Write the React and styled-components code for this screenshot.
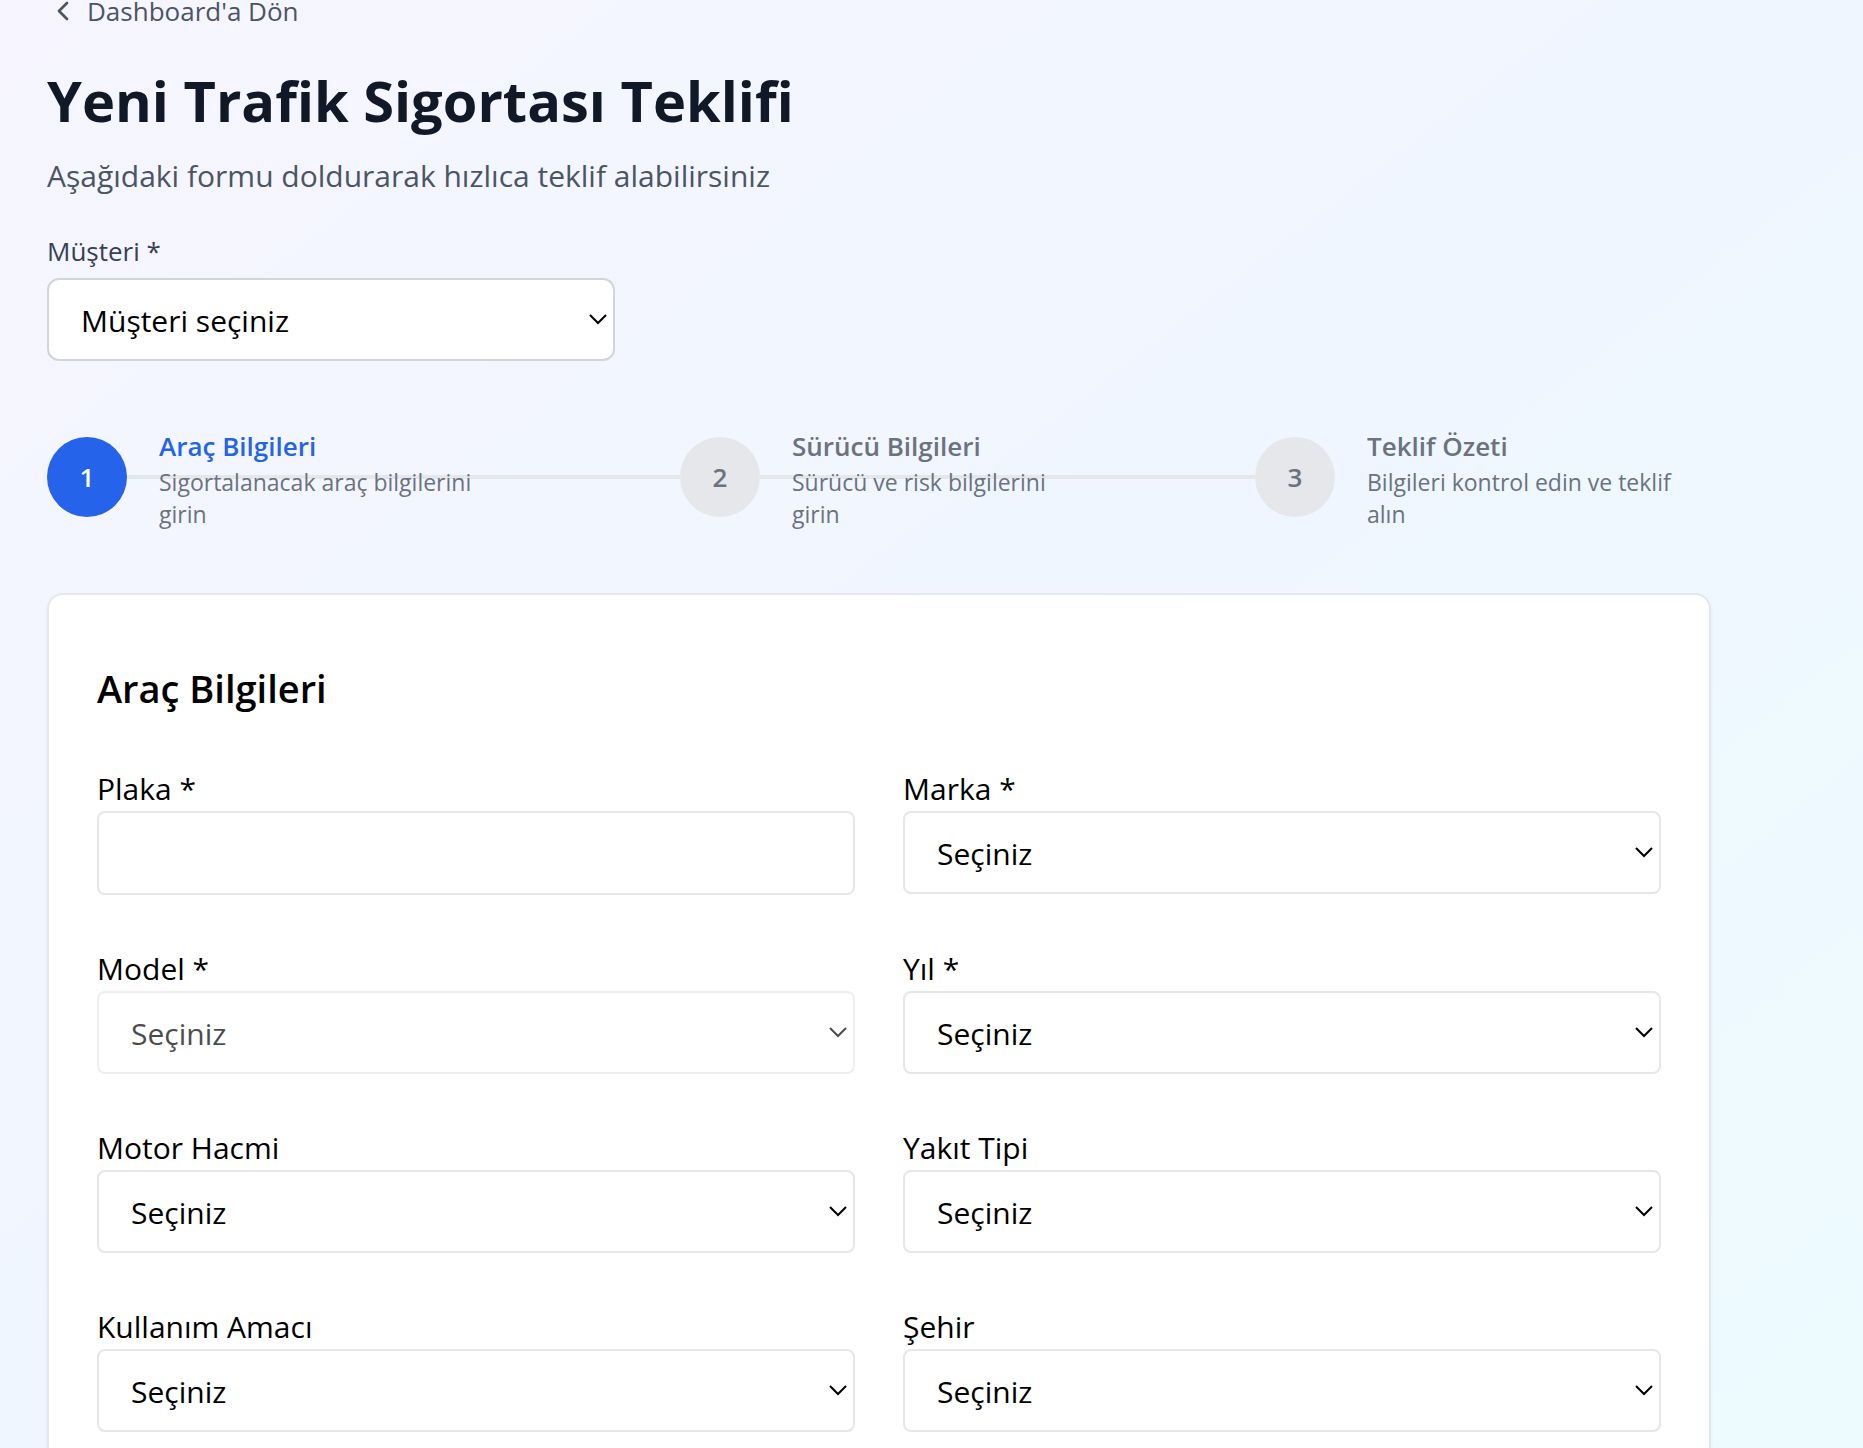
import React from "react";
import styled, { createGlobalStyle, css } from "styled-components";
import { ChevronLeft } from "lucide-react";

const GlobalStyle = createGlobalStyle`
  *, *::before, *::after { box-sizing: border-box; }
  body {
    margin: 0;
    overflow-x: hidden;
    font-family: "Segoe UI", "Open Sans", "Noto Sans", sans-serif;
    font-size: 30px;
    line-height: 48px;
    color: #000;
  }
  h1, h2, p { margin: 0; }
`;

const Page = styled.div`
  height: 100vh;
  overflow: hidden;
  background: linear-gradient(to bottom right, #faf5ff -25%, #eff6ff 52%, #ecfeff 130%);
`;

const Container = styled.main`
  max-width: 1711px;
  padding-left: 47px;
`;

const BackButton = styled.button`
  display: flex;
  align-items: center;
  gap: 8px;
  height: 22px;
  margin: 0 0 42px;
  padding: 0;
  border: 0;
  background: none;
  color: #4b5563;
  font: inherit;
  font-size: 26px;
  line-height: 22px;
  cursor: pointer;
`;

const PageTitle = styled.h1`
  margin-bottom: 16px;
  font-size: 56px;
  line-height: 72px;
  font-weight: 700;
  color: #111827;
`;

const Subtitle = styled.p`
  color: #4b5563;
`;

const Customer = styled.div`
  display: flex;
  flex-direction: column;
  gap: 7px;
  max-width: 568px;
  margin: 31px 0 63px;
`;

const CustomerLabel = styled.label`
  font-size: 26px;
  line-height: 40px;
  color: #374151;
`;

const control = css`
  display: block;
  width: 100%;
  padding: 3px 32px 0;
  border: 2px solid ${(p) => (p.$strong ? "#d1d5db" : "#e5e7eb")};
  border-radius: ${(p) => (p.$strong ? 12 : 8)}px;
  background: #fff;
  color: #000;
  font: inherit;
  outline: none;
`;

const TextInput = styled.input`
  ${control}
  height: 84px;
`;

const SelectBox = styled.div`
  position: relative;
  opacity: ${(p) => (p.$disabled ? 0.7 : 1)};
`;

const NativeSelect = styled.select`
  ${control}
  height: 83px;
  appearance: none;
  &:disabled { color: #000; opacity: 1; }
`;

const Arrow = styled.svg`
  position: absolute;
  top: 35px;
  right: 8px;
  width: 18px;
  height: 12px;
  fill: none;
  stroke: #000;
  stroke-width: 2;
  pointer-events: none;
`;

const Steps = styled.ol`
  display: grid;
  grid-template-columns: 633fr 575fr 456fr;
  margin: 0 0 63px;
  padding: 0;
  list-style: none;
`;

const Step = styled.li`
  position: relative;
  display: flex;
  align-items: center;
  gap: 32px;
  &:not(:last-child)::before {
    content: "";
    position: absolute;
    top: 51px;
    left: 80px;
    right: 0;
    height: 4px;
    background: #e5e7eb;
  }
`;

const StepNumber = styled.span`
  flex: none;
  display: grid;
  place-items: center;
  width: 80px;
  height: 80px;
  border-radius: 50%;
  background: ${(p) => (p.$active ? "#2563eb" : "#e5e7eb")};
  color: ${(p) => (p.$active ? "#fff" : "#6b7280")};
  font-size: 26px;
  font-weight: 600;
`;

const StepText = styled.div`
  position: relative;
  max-width: ${(p) => p.$width}px;
  padding-top: 2px;
`;

const StepTitle = styled.p`
  font-size: 26px;
  line-height: 40px;
  font-weight: 600;
  color: ${(p) => (p.$active ? "#2563eb" : "#6b7280")};
`;

const StepHint = styled.p`
  font-size: 23px;
  line-height: 32px;
  color: #6b7280;
`;

const Card = styled.section`
  padding: 65px 48px 64px;
  border: 2px solid #e5e7eb;
  border-radius: 16px;
  background: #fff;
  box-shadow: 0 2px 4px rgba(0, 0, 0, 0.05);
`;

const CardTitle = styled.h2`
  margin-bottom: 47px;
  font-size: 38px;
  line-height: 56px;
  font-weight: 600;
`;

const Fields = styled.div`
  display: grid;
  grid-template-columns: 1fr 1fr;
  gap: 48px;
`;

const FieldLabel = styled.label`
  display: block;
  padding-top: 4px;
  line-height: 44px;
`;

function Select({ id, placeholder, disabled, strong }) {
  return (
    <SelectBox $disabled={disabled}>
      <NativeSelect id={id} disabled={disabled} $strong={strong}>
        <option>{placeholder}</option>
      </NativeSelect>
      <Arrow viewBox="0 0 18 12" aria-hidden="true">
        <path d="M1 2l8 8 8-8" />
      </Arrow>
    </SelectBox>
  );
}

const steps = [
  { title: "Araç Bilgileri", hint: "Sigortalanacak araç bilgilerini girin", width: 320 },
  { title: "Sürücü Bilgileri", hint: "Sürücü ve risk bilgilerini girin", width: 288 },
  { title: "Teklif Özeti", hint: "Bilgileri kontrol edin ve teklif alın", width: 320 },
];

const fields = [
  { id: "plaka", label: "Plaka *", text: true },
  { id: "marka", label: "Marka *" },
  { id: "model", label: "Model *", disabled: true },
  { id: "yil", label: "Yıl *" },
  { id: "motor", label: "Motor Hacmi" },
  { id: "yakit", label: "Yakıt Tipi" },
  { id: "kullanim", label: "Kullanım Amacı" },
  { id: "sehir", label: "Şehir" },
];

export default function App() {
  return (
    <Page>
      <GlobalStyle />
      <Container>
        <BackButton type="button">
          <ChevronLeft size={32} aria-hidden="true" />
          Dashboard'a Dön
        </BackButton>
        <PageTitle>Yeni Trafik Sigortası Teklifi</PageTitle>
        <Subtitle>Aşağıdaki formu doldurarak hızlıca teklif alabilirsiniz</Subtitle>

        <Customer>
          <CustomerLabel htmlFor="musteri">Müşteri *</CustomerLabel>
          <Select id="musteri" placeholder="Müşteri seçiniz" strong />
        </Customer>

        <Steps>
          {steps.map((step, i) => (
            <Step key={step.title}>
              <StepNumber $active={i === 0}>{i + 1}</StepNumber>
              <StepText $width={step.width}>
                <StepTitle $active={i === 0}>{step.title}</StepTitle>
                <StepHint>{step.hint}</StepHint>
              </StepText>
            </Step>
          ))}
        </Steps>

        <Card>
          <CardTitle>Araç Bilgileri</CardTitle>
          <Fields>
            {fields.map((f) => (
              <div key={f.id}>
                <FieldLabel htmlFor={f.id}>{f.label}</FieldLabel>
                {f.text ? (
                  <TextInput id={f.id} type="text" />
                ) : (
                  <Select id={f.id} placeholder="Seçiniz" disabled={f.disabled} />
                )}
              </div>
            ))}
          </Fields>
        </Card>
      </Container>
    </Page>
  );
}
